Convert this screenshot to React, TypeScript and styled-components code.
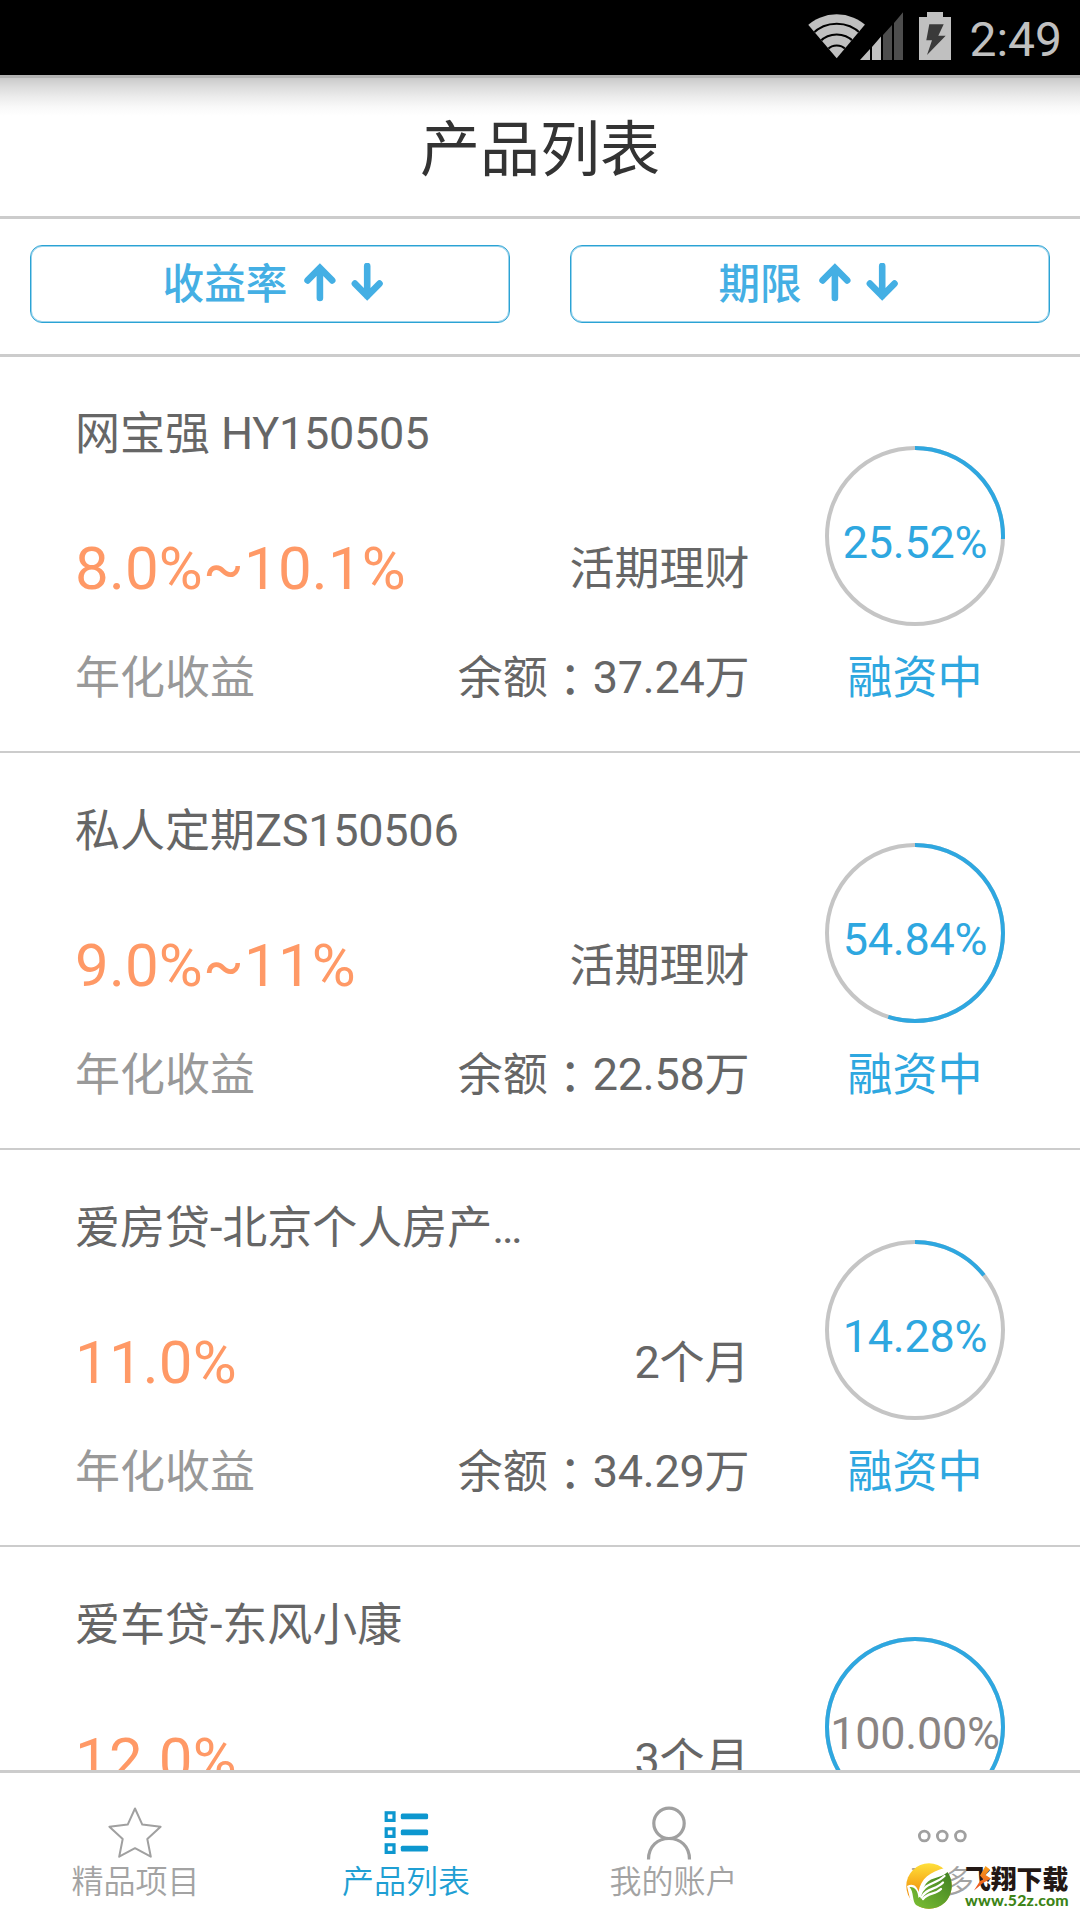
import React from "react";
import styled, { createGlobalStyle } from "styled-components";

const GlobalStyle = createGlobalStyle`
  * { box-sizing: border-box; }
  body {
    margin: 0;
    background: #fff;
    font-family: Roboto, "Noto Sans CJK SC", sans-serif;
    font-weight: 400;
  }
`;

const Screen = styled.div`
  position: relative;
  display: flex;
  flex-direction: column;
  width: 1080px;
  height: 1920px;
  overflow: hidden;
  background: #fff;
`;

const StatusBar = styled.div`
  display: flex;
  flex: none;
  justify-content: flex-end;
  align-items: center;
  height: 75px;
  padding-right: 18px;
  background: #000;
`;

const Clock = styled.span`
  margin-left: 18px;
  padding-top: 4px;
  font-size: 48px;
  line-height: 75px;
  color: #c0c0c0;
`;

const TitleBar = styled.header`
  display: flex;
  flex: none;
  justify-content: center;
  height: 144px;
  border-top: 3px solid #b2b2b2;
  border-bottom: 3px solid #ccc;
  background: linear-gradient(#cacaca 0, #dcdcdc 9px, #ececec 19px, #f9f9f9 29px, #fff 38px);
`;

const Title = styled.h1`
  margin: 0;
  font-size: 60px;
  font-weight: 400;
  line-height: 146px;
  color: #333;
`;

const SortBar = styled.div`
  display: flex;
  flex: none;
  gap: 60px;
  height: 138px;
  padding: 26px 30px 0;
  border-bottom: 3px solid #ccc;
`;

const SortButton = styled.button<{ $endPadding?: number }>`
  display: flex;
  flex: none;
  justify-content: center;
  align-items: center;
  width: 480px;
  height: 78px;
  padding: 0 ${(p) => p.$endPadding ?? 0}px 2px 6px;
  border: 1px solid #2ba3d4;
  border-radius: 12px;
  box-shadow: inset 0 0 0 1px #9bd3ec;
  background: #fff;
  font-family: inherit;
  color: #44afe4;
`;

const SortLabel = styled.span`
  padding-top: 3px;
  font-size: 41.6px;
  font-weight: 500;
  line-height: 72px;
`;

const SortArrows = styled.svg`
  width: 79px;
  height: 40px;
  margin-left: 17px;
`;

const ProductList = styled.main`
  flex: 1;
  min-height: 0;
  margin-top: -1px;
  overflow: hidden;
`;

const ProductRow = styled.article`
  display: flex;
  height: 397px;
  padding-left: 75px;
  border-bottom: 2px solid #ccc;
  font-size: 45px;
  line-height: 60px;
  letter-spacing: -0.25px;
  color: #666;
  white-space: nowrap;
`;

const Details = styled.div`
  width: 674.5px;
  padding-top: 48px;
`;

const Name = styled.div`
  height: 60px;
`;

const Line = styled.div<{ $gap: number; $height: number }>`
  display: flex;
  justify-content: space-between;
  margin-top: ${(p) => p.$gap}px;
  height: ${(p) => p.$height}px;
  line-height: ${(p) => p.$height}px;
`;

const Rate = styled.span`
  font-size: 60px;
  letter-spacing: 0.2px;
  color: #ff9966;
`;

const Muted = styled.span`
  color: #999;
`;

const Han = styled.span`
  letter-spacing: 0;
  vertical-align: -1px;
`;

const Colon = styled.span`
  font-family: "Noto Sans CJK TC", sans-serif;
  letter-spacing: 0;
  line-height: 1;
  vertical-align: -4px;
`;

const Progress = styled.div`
  display: flex;
  flex-direction: column;
  align-items: center;
  gap: 22px;
  width: 180px;
  margin-left: 75.5px;
  padding-top: 90px;
  color: #2ea7e0;
`;

const Status = styled.span`
  height: 60px;
`;

const RingBox = styled.div`
  display: grid;
  place-items: center;
  width: 180px;
  height: 180px;
`;

const RingSvg = styled.svg`
  grid-area: 1 / 1;
  width: 180px;
  height: 180px;
`;

const Percent = styled.span<{ $done: boolean }>`
  grid-area: 1 / 1;
  padding-top: 13px;
  color: ${(p) => (p.$done ? "#898483" : "#2ea7e0")};
`;

const TabBar = styled.nav`
  display: grid;
  flex: none;
  grid-template-columns: 270px 272px 260px 278px;
  height: 150px;
  border-top: 3px solid #ccc;
  background: #fff;
`;

const Tab = styled.div<{ $active?: boolean }>`
  display: flex;
  flex-direction: column;
  align-items: center;
  padding-top: 30px;
  color: ${(p) => (p.$active ? "#1f9fd3" : "#a3a3a3")};
`;

const TabIcon = styled.svg`
  flex: none;
  width: 60px;
  height: 58px;
`;

const TabLabel = styled.span<{ $indent?: number }>`
  padding-left: ${(p) => p.$indent ?? 0}px;
  font-family: "Noto Sans CJK SC", sans-serif;
  font-size: 32px;
  font-weight: 350;
  line-height: 36px;
`;

const Watermark = styled.div`
  position: absolute;
  right: 11px;
  bottom: 10px;
  display: flex;
  align-items: center;
  width: 163px;
  height: 48px;
`;

const WatermarkLogo = styled.svg`
  flex: none;
  width: 46px;
  height: 46px;
`;

const WatermarkText = styled.div`
  margin-left: 13px;
  white-space: nowrap;
`;

const WatermarkName = styled.div`
  position: relative;
  height: 26px;
  font-family: "Noto Sans CJK SC", sans-serif;
  font-size: 25.8px;
  font-weight: 900;
  line-height: 26px;
  color: #231815;
`;

const WatermarkBolt = styled.svg`
  position: absolute;
  left: 9px;
  top: 1px;
  width: 18px;
  height: 25px;
`;

const WatermarkUrl = styled.div`
  height: 16px;
  font-family: Lato, sans-serif;
  font-size: 15.8px;
  font-weight: 900;
  line-height: 18px;
  letter-spacing: 0.25px;
  color: #3d8417;
`;

const StatusIcons = () => (
  <svg width="146" height="75" viewBox="805 0 146 75">
    <defs>
      <clipPath id="wedge">
        <path d="M836.7 58.3 L800 15 L800 0 L873 0 L873 15 Z" />
      </clipPath>
    </defs>
    <g clipPath="url(#wedge)">
      <circle cx="836.7" cy="58.3" r="44" fill="#c0c0c0" />
      <g fill="none" stroke="#000" strokeWidth="2">
        <circle cx="836.7" cy="58.3" r="34.5" />
        <circle cx="836.7" cy="58.3" r="23.7" />
        <circle cx="836.7" cy="58.3" r="12.7" />
      </g>
    </g>
    <path fill="#c0c0c0" d="M860 60 L870 49 V60 Z M872 60 V47 L881 36.5 V60 Z" />
    <path fill="#4d4d4d" d="M883 60 V35 L892 25 V60 Z M894 60 V23 L903 12.3 V60 Z" />
    <path fill="#c0c0c0" d="M919 17 H927 V12 H943 V17 H951 V60 H919 Z" />
    <path fill="#3a3a3a" d="M929.3 24.3 H943.7 L938.3 35.7 H945.7 L927 55 L932 40.3 H926.3 Z" />
  </svg>
);

const Arrows = () => (
  <SortArrows viewBox="0 0 79 40" fill="none" stroke="#44afe4" strokeWidth="6.6" strokeLinecap="round">
    <path d="M15.9 35 V6 M3.6 17.4 L15.9 5 L28.2 17.4" />
    <path d="M63.2 3 V33 M50.9 20.6 L63.2 33 L75.5 20.6" />
  </SortArrows>
);

/** Sets runs of Han characters slightly below the Latin baseline. */
const MixedText = ({ text }: { text: string }) => (
  <>
    {text.split(/([\u4e00-\u9fff]+)/).map((part, i) => (i % 2 ? <Han key={i}>{part}</Han> : part))}
  </>
);

const Ring = ({ value }: { value: number }) => {
  const length = 2 * Math.PI * 88;
  return (
    <RingBox>
      <RingSvg viewBox="0 0 180 180" fill="none" strokeWidth="4">
        <circle cx="90" cy="90" r="88" stroke="#c5c5c5" />
        <circle
          cx="90"
          cy="90"
          r="88"
          stroke="#2ea7e0"
          strokeDasharray={`${(length * value) / 100} ${length}`}
          transform="rotate(-90 90 90)"
        />
      </RingSvg>
      <Percent $done={value >= 100}>{value.toFixed(2)}%</Percent>
    </RingBox>
  );
};

const products = [
  { name: "网宝强 HY150505", rate: "8.0%~10.1%", term: "活期理财", balance: "37.24", progress: 25.52, status: "融资中" },
  { name: "私人定期ZS150506", rate: "9.0%~11%", term: "活期理财", balance: "22.58", progress: 54.84, status: "融资中" },
  { name: "爱房贷-北京个人房产…", rate: "11.0%", term: "2个月", balance: "34.29", progress: 14.28, status: "融资中" },
  { name: "爱车贷-东风小康", rate: "12.0%", term: "3个月", balance: "", progress: 100, status: "" },
];

export default function App() {
  return (
    <>
      <GlobalStyle />
      <Screen>
        <StatusBar>
          <StatusIcons />
          <Clock>2:49</Clock>
        </StatusBar>
        <TitleBar>
          <Title>产品列表</Title>
        </TitleBar>
        <SortBar>
          <SortButton>
            <SortLabel>收益率</SortLabel>
            <Arrows />
          </SortButton>
          <SortButton $endPadding={10}>
            <SortLabel>期限</SortLabel>
            <Arrows />
          </SortButton>
        </SortBar>
        <ProductList>
          {products.map((p) => (
            <ProductRow key={p.name}>
              <Details>
                <Name>
                  <MixedText text={p.name} />
                </Name>
                <Line $gap={70} $height={70}>
                  <Rate>{p.rate}</Rate>
                  <span>
                    <MixedText text={p.term} />
                  </span>
                </Line>
                {p.balance && (
                  <Line $gap={44} $height={60}>
                    <Muted>
                      <MixedText text="年化收益" />
                    </Muted>
                    <span>
                      <Han>余额</Han>
                      <Colon lang="zh-Hant">：</Colon>
                      <MixedText text={`${p.balance}万`} />
                    </span>
                  </Line>
                )}
              </Details>
              <Progress>
                <Ring value={p.progress} />
                {p.status && (
                  <Status>
                    <MixedText text={p.status} />
                  </Status>
                )}
              </Progress>
            </ProductRow>
          ))}
        </ProductList>
        <TabBar>
          <Tab>
            <TabIcon viewBox="105 1803 60 58" fill="none" stroke="#a0a0a0" strokeWidth="2">
              <path
                strokeLinejoin="round"
                d="M135 1808.5 L142.3 1824.6 L160.6 1826.8 L147.3 1839 L150.8 1856.7 L135 1848.2 L119.2 1856.7 L122.7 1839 L109.4 1826.8 L127.7 1824.6 Z"
              />
            </TabIcon>
            <TabLabel $indent={1}>精品项目</TabLabel>
          </Tab>
          <Tab $active>
            <TabIcon viewBox="376 1803 60 58">
              <g fill="none" stroke="#0d97cf" strokeWidth="3.2">
                <rect x="386.2" y="1812.8" width="7.8" height="7.6" />
                <rect x="386.2" y="1828.8" width="7.8" height="7.6" />
                <rect x="386.2" y="1844.8" width="7.8" height="7.6" />
              </g>
              <g fill="#0d97cf">
                <rect x="400.8" y="1813.6" width="27.3" height="5.6" rx="1.5" />
                <rect x="400.8" y="1829.6" width="27.3" height="5.6" rx="1.5" />
                <rect x="400.8" y="1845.8" width="27.3" height="5.6" rx="1.5" />
              </g>
            </TabIcon>
            <TabLabel>产品列表</TabLabel>
          </Tab>
          <Tab>
            <TabIcon viewBox="642 1803 60 58" fill="none" stroke="#a0a0a0" strokeWidth="3.2">
              <circle cx="669" cy="1823.3" r="15.2" />
              <path d="M648.5 1859.5 C648.5 1846 658 1838.5 669 1838.5 S689.5 1846 689.5 1859.5" />
            </TabIcon>
            <TabLabel $indent={3}>我的账户</TabLabel>
          </Tab>
          <Tab>
            <TabIcon viewBox="911 1803 60 58" fill="none" stroke="#a0a0a0" strokeWidth="2.8">
              <circle cx="924.3" cy="1836" r="4.9" />
              <circle cx="942.3" cy="1836" r="4.9" />
              <circle cx="960.4" cy="1836" r="4.9" />
            </TabIcon>
            <TabLabel $indent={2}>更多</TabLabel>
          </Tab>
        </TabBar>
        <Watermark>
          <WatermarkLogo viewBox="0 0 46 46">
            <defs>
              <linearGradient id="sun" x1="0" y1="0" x2="0" y2="1">
                <stop offset="0" stopColor="#ffe03a" />
                <stop offset="0.6" stopColor="#f39a12" />
                <stop offset="1" stopColor="#f08300" />
              </linearGradient>
              <linearGradient id="leaf" x1="0" y1="1" x2="1" y2="0">
                <stop offset="0" stopColor="#7fc234" />
                <stop offset="1" stopColor="#3f7f22" />
              </linearGradient>
            </defs>
            <circle cx="23" cy="23" r="22.7" fill="url(#sun)" />
            <path fill="#fff" d="M1 23 C7 20 11 23 12.5 29 C15 15 24 9 39 5 L43 10 L10 44 L4 36 Z" />
            <path
              fill="url(#leaf)"
              d="M41.5 9 C48 18 47 31 39 39.5 C31 47 19 47.5 10 42 C6 38 8 29 3.5 24 C9 23.5 12 28 12.5 35 C17 32 16 21 25 16.5 C31 14 37 13.5 41.5 9 Z"
            />
            <g fill="none" stroke="#fff" strokeWidth="2.3" strokeLinecap="round">
              <path d="M14 33 C17 20 29 22 38.5 13" />
              <path d="M15.5 34.5 C20 25 30 27 37 19.5" />
              <path d="M17 36 C22 29.5 29 32 35 26" />
            </g>
          </WatermarkLogo>
          <WatermarkText>
            <WatermarkName>
              飞翔下载
              <WatermarkBolt viewBox="0 0 18 25">
                <defs>
                  <linearGradient id="bolt" x1="0" y1="0" x2="0" y2="1">
                    <stop offset="0" stopColor="#f9a01b" />
                    <stop offset="1" stopColor="#ea4a1f" />
                  </linearGradient>
                </defs>
                <path fill="url(#bolt)" d="M11.5 0 L16 3.5 L11.5 9 L17 12.5 L9 17 L0 24.5 L6 15 L9.5 13.5 L6 9.5 Z" />
              </WatermarkBolt>
            </WatermarkName>
            <WatermarkUrl>www.52z.com</WatermarkUrl>
          </WatermarkText>
        </Watermark>
      </Screen>
    </>
  );
}
